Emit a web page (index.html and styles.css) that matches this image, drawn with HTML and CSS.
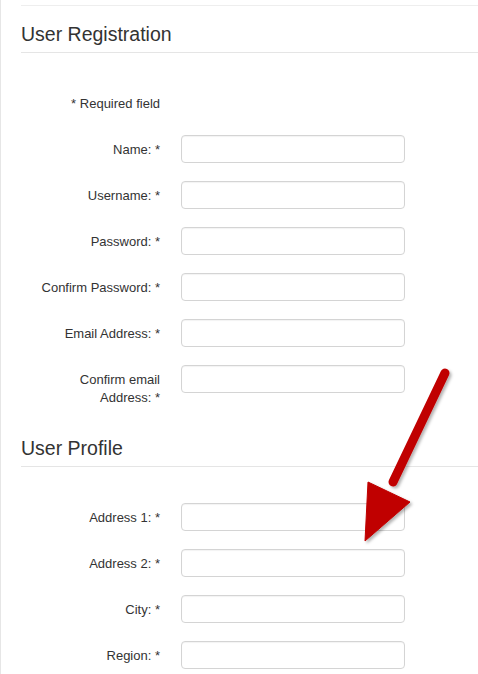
FILE: index.html
```html
<!DOCTYPE html>
<html lang="en">
<head>
  <meta charset="UTF-8" />
  <title>User Registration</title>
  <link rel="stylesheet" href="styles.css">
</head>
<body>
<div class="page">
  <form class="form">
    <fieldset class="section section-top">
      <h2 class="section-title">User Registration</h2>
      <div class="rows">
        <div class="row">
          <div class="row-label">* Required field</div>
        </div>
        <div class="row">
          <label class="row-label" for="name">Name: *</label>
          <input class="field" id="name" type="text">
        </div>
        <div class="row">
          <label class="row-label" for="username">Username: *</label>
          <input class="field" id="username" type="text">
        </div>
        <div class="row">
          <label class="row-label" for="password">Password: *</label>
          <input class="field" id="password" type="password">
        </div>
        <div class="row">
          <label class="row-label" for="password2">Confirm Password: *</label>
          <input class="field" id="password2" type="password">
        </div>
        <div class="row">
          <label class="row-label" for="email">Email Address: *</label>
          <input class="field" id="email" type="text">
        </div>
        <div class="row">
          <label class="row-label" for="email2">Confirm email<br>Address: *</label>
          <input class="field" id="email2" type="text">
        </div>
      </div>
    </fieldset>

    <fieldset class="section">
      <h2 class="section-title">User Profile</h2>
      <div class="rows">
        <div class="row">
          <label class="row-label" for="addr1">Address 1: *</label>
          <input class="field" id="addr1" type="text">
        </div>
        <div class="row">
          <label class="row-label" for="addr2">Address 2: *</label>
          <input class="field" id="addr2" type="text">
        </div>
        <div class="row">
          <label class="row-label" for="city">City: *</label>
          <input class="field" id="city" type="text">
        </div>
        <div class="row">
          <label class="row-label" for="region">Region: *</label>
          <input class="field" id="region" type="text">
        </div>
      </div>
    </fieldset>
  </form>

  <svg class="arrow" width="478" height="674" viewBox="0 0 478 674">
    <defs>
      <filter id="arrow-shadow" x="-20%" y="-20%" width="140%" height="140%">
        <feDropShadow dx="2" dy="2" stdDeviation="1.5" flood-color="#000" flood-opacity="0.3"/>
      </filter>
    </defs>
    <g filter="url(#arrow-shadow)" fill="#c00000" stroke="#c00000">
      <line x1="444" y1="373" x2="392" y2="482" stroke-width="9" stroke-linecap="round"/>
      <polygon points="367,482 409,502 364,541" stroke-width="1" stroke-linejoin="round"/>
    </g>
  </svg>
</div>
</body>
</html>
```

FILE: styles.css
```css
html, body {
  margin: 0;
  background: #fff;
}
body {
  font-family: "Liberation Sans", Arial, sans-serif;
  font-size: 13px;
  color: #333;
}
.page {
  position: relative;
  min-height: 674px;
  box-sizing: border-box;
  border-left: 1px solid #e6e6e6;
  padding: 5px 0 0 20px;
}
.form {
  margin: 0;
}
.section {
  margin: 0;
  padding: 0 0 13px;
  border: none;
  min-width: 0;
}
.section-top {
  border-top: 1px solid #eee;
}
.section-title {
  margin: 0;
  padding: 17px 0 7px;
  font-size: 19.5px;
  line-height: 22px;
  font-weight: 400;
  color: #333;
  border-bottom: 1px solid #e5e5e5;
}
.rows {
  display: flex;
  flex-direction: column;
  gap: 18px;
  margin-top: 36px;
}
.row {
  display: flex;
  align-items: flex-start;
  gap: 21px;
  min-height: 28px;
}
.row-label {
  width: 139px;
  flex: none;
  box-sizing: border-box;
  padding-top: 6px;
  text-align: right;
  line-height: 18px;
}
.field {
  width: 224px;
  height: 28px;
  box-sizing: border-box;
  margin: 0;
  padding: 4px 8px;
  border: 1px solid #d4d4d4;
  border-radius: 4px;
  background: #fff;
  box-shadow: inset 0 1px 1px rgba(0,0,0,0.05);
  font: inherit;
}
.arrow {
  position: absolute;
  top: 0;
  left: 0;
  pointer-events: none;
}
```
